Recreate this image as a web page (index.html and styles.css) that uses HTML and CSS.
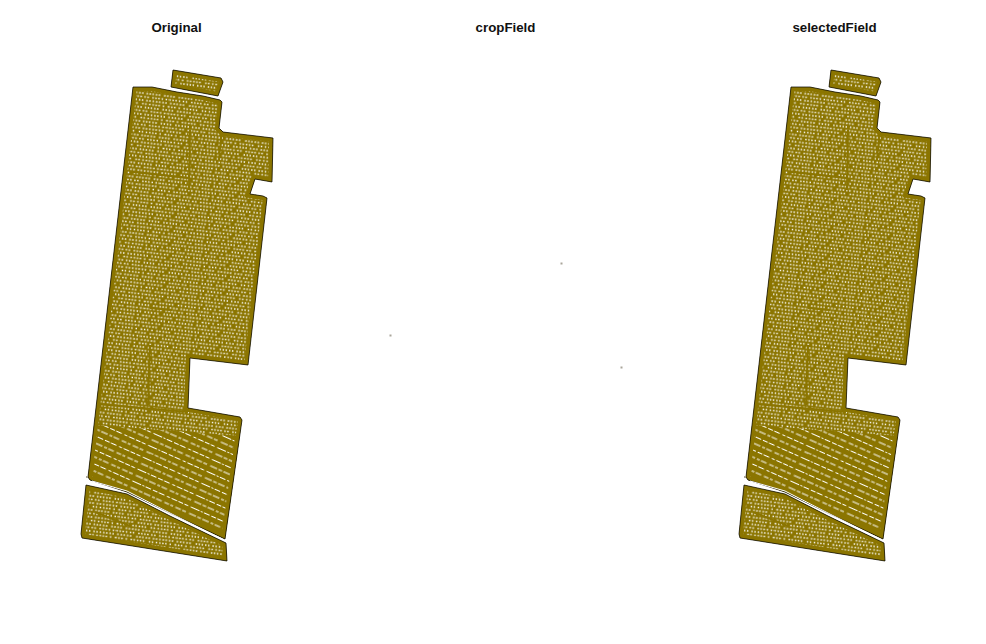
FILE: index.html
```html
<!DOCTYPE html>
<html lang="en">
<head>
  <meta charset="UTF-8">
  <title>Field plots</title>
  <link rel="stylesheet" href="styles.css">
</head>
<body>
<div class="plots">
  <div class="plot">
    <h2 class="plot-title">Original</h2>
    <svg class="map" viewBox="24 60 305 520">
      <defs>
        <pattern id="dotsA" width="60" height="14" patternUnits="userSpaceOnUse" patternTransform="rotate(7)">
          <g class="dots">
            <path stroke-dasharray="1.4 1.6 1.4 1.6 1.4 3 1.4 3.600 1.4 1.6 1.4 2 1.4 1.6 1.4 1.6 1.4 4.600 1.4 1.6 1.4 2.600 1.4 2" d="M0 1.500H60"/>
            <path stroke-dasharray="1.4 3 1.4 1.6 1.4 1.6 1.4 2 1.4 1.6 1.4 4 1.4 1.6 1.4 2 1.4 1.6 1.4 1.6 1.4 3 1.4 2 1.4 1.6" d="M0 5H60" stroke-dashoffset="13"/>
            <path stroke-dasharray="1.4 1.6 1.4 4 1.4 1.6 1.4 1.6 1.4 1.6 1.4 2.600 1.4 1.6 1.4 3.600 1.4 1.6 1.4 1.6 1.4 2 1.4 2.600" d="M0 8.500H60" stroke-dashoffset="29"/>
            <path stroke-dasharray="1.4 2 1.4 1.6 1.4 2 1.4 1.6 1.4 5 1.4 1.6 1.4 1.6 1.4 2 1.4 1.6 1.4 3 1.4 1.6 1.4 2" d="M0 12H60" stroke-dashoffset="41"/>
          </g>
        </pattern>
        <pattern id="dotsB" width="64" height="13" patternUnits="userSpaceOnUse" patternTransform="rotate(24)">
          <g class="dots dots-thin">
            <path stroke-dasharray="5 1.5 4 1.5 7 2 3 1.5 6 3 5 1.5 3 2.5 6 1.5 4 3.500" d="M0 2H64"/>
            <path stroke-dasharray="3 2 6 1.5 5 1.5 4 3 7 1.5 2 1.5 6 2 5 1.5 6 3" d="M0 8.500H64" stroke-dashoffset="27"/>
          </g>
        </pattern>
        <clipPath id="fieldClip">
          <path id="fieldShape" d="M133 87L152 87L177 92L203 96L220 100L222 102L219 128L223 132L273 138L272 182L255 179L250 194L263 196L267 198L248 365L190 358L188 408L240 417L242 420L225 539L170 513L127 492L90 480L88 477ZM173 70L221 78L223 82L218 96L171 87ZM86 485L127 494L170 516L226 543L227 561L82 538L81 534Z"/>
        </clipPath>
        <symbol id="field" viewBox="24 60 305 520">
          <use href="#fieldShape" class="field-fill"/>
          <use href="#fieldShape" fill="url(#dotsA)"/>
          <g clip-path="url(#fieldClip)">
            <path class="field-fill" d="M94 425L242 436L226 540L170 513L127 492L88 479Z"/>
            <path fill="url(#dotsB)" d="M94 425L242 436L226 540L170 513L127 492L88 479Z"/>
            <use href="#fieldShape" class="field-edge"/>
            <path class="bands" d="M133 172L190 178M190 130L189 190M150 345L148 405M97 404L188 412M222 128L219 160M150 308L172 310M150 455L175 467M95 512L130 526"/>
          </g>
          <use href="#fieldShape" class="field-line"/>
          <path class="gap" d="M92 481L127 491L170 513L224 540"/>
          <rect class="speck" x="86" y="476" width="2" height="2"/>
        </symbol>
      </defs>
      <use href="#field" x="24" y="60" width="305" height="520"/>
    </svg>
  </div>
  <div class="plot">
    <h2 class="plot-title">cropField</h2>
    <svg class="map" viewBox="24 60 305 520">
      <rect class="speck" x="60.500" y="334.500" width="2" height="2"/>
      <rect class="speck" x="231.500" y="262.500" width="2" height="2"/>
      <rect class="speck" x="291.500" y="366.500" width="2" height="2"/>
    </svg>
  </div>
  <div class="plot">
    <h2 class="plot-title">selectedField</h2>
    <svg class="map" viewBox="24 60 305 520">
      <use href="#field" x="24" y="60" width="305" height="520"/>
    </svg>
  </div>
</div>
</body>
</html>
```
FILE: styles.css
```css
* {
  margin: 0;
  padding: 0;
}

body {
  background-color: #fff;
  font-family: "Liberation Sans", Arial, sans-serif;
}

.plots {
  display: grid;
  grid-template-columns: repeat(3, 1fr);
  height: 644px;
  overflow: hidden;
}

.plot {
  padding: 20px 0 0 24px;
}

.plot-title {
  font-size: 13.300px;
  font-weight: bold;
  line-height: 15px;
  text-align: center;
  color: #111;
}

.map {
  display: block;
  width: 305px;
  height: 520px;
  margin-top: 25px;
}

.field-fill {
  fill: #8b7500;
}

.dots path {
  fill: none;
  stroke: #fff;
  stroke-width: 1.7;
}

.dots-thin path {
  stroke-width: 1.2;
}

.field-edge {
  fill: none;
  stroke: #8b7500;
  stroke-width: 8;
}

.bands {
  fill: none;
  stroke: #8b7500;
  stroke-width: 2;
}

.field-line {
  fill: none;
  stroke: #000;
  stroke-width: 0.7;
}

.gap {
  fill: none;
  stroke: #fff;
  stroke-width: 1;
}

.speck {
  fill: #a9a59a;
}
```
